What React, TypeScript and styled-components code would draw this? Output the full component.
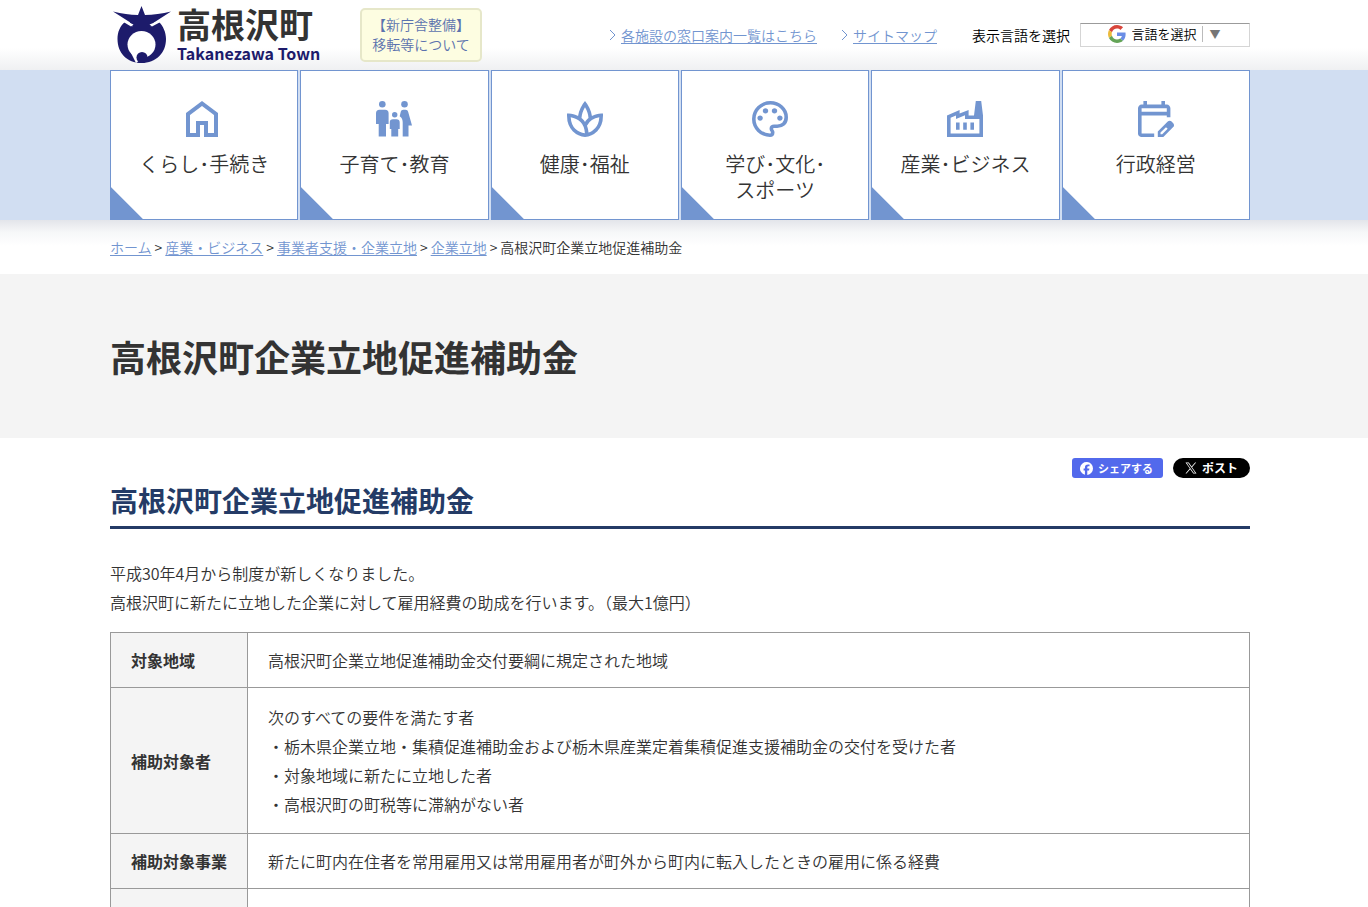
import React from "react";
import styled, { createGlobalStyle } from "styled-components";
import { MdOutlineFactory } from "react-icons/md";

const accent = "#7295d0";
const navy = "#243b66";
const rule = "#999";

const GlobalStyle = createGlobalStyle`
  *, *::before, *::after { box-sizing: border-box; }
  body {
    margin: 0;
    background: #fff;
    color: #333;
    font-family: "Noto Sans CJK JP", sans-serif;
    font-size: 16px;
    font-weight: 350;
    line-height: 29px;
  }
  a { color: ${accent}; text-underline-offset: 2px; }
  h1, h2, p, ul, ol { margin: 0; padding: 0; }
  ul, ol { list-style: none; }
`;

const Band = styled.div`
  padding-right: 8px;
`;

const Container = styled.div`
  max-width: 1140px;
  margin: 0 auto;
`;

const HeaderBand = styled(Band).attrs({ as: "header" })`
  background: linear-gradient(#fff 48px, #eff0f2 70px);
`;

const HeaderRow = styled(Container)`
  display: flex;
  align-items: center;
  height: 70px;
`;

const Logo = styled.a`
  display: flex;
  align-items: center;
  gap: 4px;
  width: 250px;
  padding-left: 3px;
  text-decoration: none;
`;

const LogoText = styled.span`
  display: flex;
  flex-direction: column;
  font-weight: 700;
`;

const TownName = styled.span`
  color: #333;
  font-size: 34px;
  line-height: 36px;
`;

const TownRoman = styled.span`
  color: #1d1b6b;
  font-size: 16px;
  line-height: 22px;
`;

const Notice = styled.a`
  padding: 4px 10px 6px;
  border: 2px solid #e6e7c9;
  border-radius: 5px;
  background: #fdfde1;
  color: #5b72ae;
  font-size: 14px;
  line-height: 20px;
  text-align: center;
  text-decoration: none;
  text-spacing-trim: space-all;
`;

const Utility = styled.div`
  display: flex;
  align-items: center;
  margin-left: auto;
  font-size: 14px;
  line-height: 20px;
`;

const UtilityLinks = styled.ul`
  display: flex;
  gap: 24px;
  margin-right: 35px;
`;

const UtilityItem = styled.li`
  display: flex;
  align-items: center;
  gap: 5px;
`;

const LanguageLabel = styled.label`
  margin-right: 10px;
  color: #000;
`;

const LanguageBox = styled.div`
  display: flex;
  align-items: center;
  justify-content: center;
  width: 170px;
  height: 24px;
  padding-bottom: 2px;
  border: 1px solid #d5d5d5;
  border-top-color: #9b9b9b;
  background: #fff;
`;

const LanguageSelect = styled.select`
  appearance: none;
  margin: 0 4px 0 6px;
  padding: 0;
  border: 0;
  background: transparent;
  color: #000;
  font: 350 13px/20px "Noto Sans CJK JP", sans-serif;
`;

const LanguageArrow = styled.span`
  padding: 0 2px 0 7px;
  border-left: 1px solid #bbb;
  color: #767676;
  font-size: 11px;
  line-height: 16px;
`;

const NavBand = styled(Band).attrs({ as: "nav" })`
  background: #d1def2;
`;

const NavGrid = styled.ul`
  display: grid;
  grid-template-columns: repeat(6, 1fr);
  gap: 2px;
  max-width: 1140px;
  margin: 0 auto;
`;

const NavCard = styled.a`
  display: flex;
  flex-direction: column;
  align-items: center;
  height: 150px;
  padding: 30px 20px 0;
  border: 1px solid ${accent};
  background: linear-gradient(45deg, ${accent} 22px, #fff 23px);
  color: ${accent};
  text-decoration: none;
`;

const NavLabel = styled.span`
  margin-top: 14px;
  color: #333;
  font-size: 20px;
  line-height: 26px;
  text-align: center;
  white-space: pre-line;
`;

const CrumbBand = styled(Band)`
  background: linear-gradient(#e3e5ea, #f6f7f8 12px, #fff 26px);
`;

const Crumbs = styled.ol`
  display: flex;
  flex-wrap: wrap;
  max-width: 1140px;
  margin: 0 auto;
  padding: 17px 0;
  font-size: 14px;
  line-height: 20px;
`;

const Crumb = styled.li`
  &:not(:last-child)::after {
    content: ">";
    margin: 0 3px;
  }
`;

const TitleBand = styled(Band)`
  padding-top: 55px;
  padding-bottom: 55px;
  background: #f4f4f4;
`;

const PageTitle = styled.h1`
  font-size: 36px;
  line-height: 54px;
`;

const Main = styled(Band).attrs({ as: "main" })`
  padding-top: 20px;
`;

const ShareRow = styled.div`
  display: flex;
  justify-content: flex-end;
  gap: 10px;
`;

const ShareButton = styled.button<{ $post?: boolean }>`
  display: flex;
  align-items: center;
  gap: 5px;
  height: 20px;
  padding: ${(p) => (p.$post ? "0 12px" : "0 10px 0 8px")};
  border: 0;
  border-radius: ${(p) => (p.$post ? 10 : 3)}px;
  background: ${(p) => (p.$post ? "#000" : "#5269ec")};
  color: #fff;
  font: 700 ${(p) => (p.$post ? 12 : 11)}px/20px "Noto Sans CJK JP", sans-serif;
`;

const SectionTitle = styled.h2`
  padding-bottom: 4px;
  border-bottom: 3px solid ${navy};
  color: ${navy};
  font-size: 28px;
  line-height: 44px;
`;

const Lead = styled.p`
  margin: 30px 0 15px;
`;

const DataTable = styled.table`
  width: 100%;
  border-collapse: collapse;
  line-height: 25px;

  th, td {
    height: 54px;
    padding: 15px 20px 14px;
    border: 1px solid ${rule};
    text-align: left;
  }
  th {
    width: 1%;
    background: #f4f4f4;
    white-space: nowrap;
  }
`;

const Requirements = styled.div`
  line-height: 29px;
`;

const TownMark = () => (
  <svg width="60" height="58" viewBox="0 0 60 58" aria-hidden="true">
    <g fill="#1d1b6b">
      <path d="M28.500 0 32 9C40 9 49 7.500 58 5.500L41 16.500 37.500 20.500C41 18.500 43.500 17.500 46 16C50 20 53 26 53 33C53 47 43 57 28.500 57C14 57 4.500 47 4.500 33C4.500 26 7 20 12 16C14 17.500 17 18.500 20 20.500L16.500 16 0 5.500C9 7.500 17 9 25 9Z" />
    </g>
    <ellipse cx="28.500" cy="38.500" rx="14" ry="13.500" fill="#fff" />
    <path d="M18 20.500 20.500 18.500 11.500 14.500 10.500 16ZM39 20.500 36.500 18.500 46.500 14.500 47.500 16Z" fill="#fff" />
    <path d="M18 47 23 57 27 54 33 48Z" fill="#fff" />
    <circle cx="29" cy="51.500" r="5.500" fill="#1d1b6b" />
  </svg>
);

const Chevron = () => (
  <svg width="7" height="12" viewBox="0 0 7 12" fill="none" stroke={accent} aria-hidden="true">
    <path d="M1 1l5 5-5 5" />
  </svg>
);

const GoogleMark = () => (
  <svg width="18" height="18" viewBox="0 0 48 48" aria-hidden="true">
    <path fill="#d8453b" d="M24 9.500c3.540 0 6.710 1.220 9.210 3.600l6.850-6.850C35.900 2.380 30.470 0 24 0 14.620 0 6.510 5.380 2.560 13.220l7.980 6.190C12.430 13.720 17.740 9.500 24 9.500z" />
    <path fill="#6a8ee6" d="M46.980 24.550c0-1.570-.15-3.090-.38-4.550H24v9.020h12.940c-.58 2.960-2.260 5.480-4.780 7.180l7.730 6c4.510-4.180 7.090-10.360 7.090-17.650z" />
    <path fill="#ecbb3a" d="M10.530 28.590c-.48-1.450-.76-2.990-.76-4.590s.27-3.140.76-4.590l-7.980-6.190C.92 16.460 0 20.120 0 24s.92 7.540 2.560 10.780l7.970-6.190z" />
    <path fill="#64a457" d="M24 48c6.480 0 11.930-2.130 15.890-5.810l-7.730-6c-2.150 1.450-4.920 2.300-8.160 2.300-6.260 0-11.570-4.220-13.470-9.910l-7.980 6.190C6.510 42.620 14.620 48 24 48z" />
  </svg>
);

type SymbolProps = { d: string; viewBox: string; width?: number };

const SymbolIcon = ({ d, viewBox, width = 36 }: SymbolProps) => (
  <svg
    width={width}
    height="36"
    viewBox={viewBox}
    preserveAspectRatio="xMinYMid meet"
    fill="currentColor"
    aria-hidden="true"
  >
    <path d={d} />
  </svg>
);

const homePath =
  "M240-200h120v-240h240v240h120v-360L480-740 240-560v360Zm-80 80v-480l320-240 320 240v480H520v-240h-80v240H160Z";

const spaPath =
  "M480-80q-73-9-145-39.500T206.500-207Q150-264 115-351T80-560v-40h40q51 0 105 13t101 39q12-86 54.500-176.500T480-880q57 65 99.500 155.500T634-548q47-26 101-39t105-13h40v40q0 122-35 209t-91.500 144q-56.500 57-128 87.500T480-80Zm-2-82q-11-166-98.500-251T162-518q11 171 101.500 255T478-162Zm2-254q15-22 36.500-45.500T558-502q-2-57-22.500-119T480-742q-35 59-55.500 121T402-502q20 17 42 40.500t36 45.500Zm78 236q37-12 77-35t74.500-62.500q34.500-39.500 59-98.500T798-518q-94 14-165 62.500T524-332q12 32 20.500 70t13.500 82Z";

const palettePath =
  "M480-80q-82 0-155-31.500t-127.500-86Q143-252 111.500-325T80-480q0-83 32.500-156t88-127Q256-817 330-848.500T488-880q80 0 151 27.500t124.500 76q53.500 48.500 85 115T880-518q0 115-70 176.500T640-280h-74q-9 0-12.500 5t-3.500 11q0 12 15 34.500t15 51.500q0 50-27.500 74T480-80ZM260-440q26 0 43-17t17-43q0-26-17-43t-43-17q-26 0-43 17t-17 43q0 26 17 43t43 17Zm120-160q26 0 43-17t17-43q0-26-17-43t-43-17q-26 0-43 17t-17 43q0 26 17 43t43 17Zm200 0q26 0 43-17t17-43q0-26-17-43t-43-17q-26 0-43 17t-17 43q0 26 17 43t43 17Zm120 160q26 0 43-17t17-43q0-26-17-43t-43-17q-26 0-43 17t-17 43q0 26 17 43t43 17ZM480-160q9 0 14.500-5t5.500-13q0-14-15-33t-15-57q0-42 29-67t71-25h70q66 0 113-38.500T800-518q0-121-92.500-201.500T488-800q-136 0-232 93t-96 227q0 133 93.500 226.500T480-160Z";

const calendarPath =
  "M200-80q-33 0-56.500-23.500T120-160v-560q0-33 23.500-56.500T200-800h40v-80h80v80h320v-80h80v80h40q33 0 56.500 23.500T840-720v200h-80v-40H200v400h280v80H200Zm0-560h560v-80H200v80ZM560-80v-123l221-220q9-9 20-13t22-4q12 0 23 4.500t20 13.500l37 37q8 9 12.500 20t4.500 22q0 11-4 22.500T903-300L683-80H560Zm60-60h38l121-122-18-19-19-18-122 121v38Z";

const FamilyIcon = () => (
  <svg width="36" height="36" viewBox="0 0 36 36" fill="currentColor" aria-hidden="true">
    <circle cx="6.300" cy="3.300" r="3.300" />
    <circle cx="28.500" cy="3.300" r="3.300" />
    <circle cx="18.700" cy="13.800" r="2.700" />
    <path d="M3.500 8.800h5.600a3.500 3.500 0 0 1 3.500 3.500V23H10v12.500H2.700V23H0V12.300a3.500 3.500 0 0 1 3.500-3.500Z" />
    <path d="M17 18.300h3.400a3.300 3.300 0 0 1 3.300 3.300V28h-1.500v7.500h-6.900V28h-1.500v-6.400a3.200 3.200 0 0 1 3.200-3.300Z" />
    <path d="M27.300 8.800h2.200c1.400 0 2.300.8 2.700 2.100L36 24.500h-3.500v11h-5.800v-14c0-2.500-.7-4.600-3-6.200l1-4.400c.4-1.300 1.300-2.100 2.600-2.100Z" />
  </svg>
);

const FacebookMark = () => (
  <svg width="13" height="13" viewBox="0 0 24 24" fill="#fff" aria-hidden="true">
    <path d="M24 12a12 12 0 1 0-14.900 11.650v-7.980H6.630V12H9.100v-1.580c0-4.090 1.850-5.980 5.860-5.980.76 0 2.070.15 2.610.3v3.320c-.28-.03-.78-.04-1.390-.04-1.970 0-2.730.75-2.730 2.680V12h3.920l-.67 3.670h-3.250v8.240A12 12 0 0 0 24 12z" />
  </svg>
);

const XMark = () => (
  <svg width="12" height="12" viewBox="0 0 24 24" fill="#fff" aria-hidden="true">
    <path d="M14.100 10.300 22.300 1h-2l-7.100 8.100L7.600 1H1l8.600 12.200L1 23h2l7.500-8.600 6 8.600H23zM3.700 2.500h3l13.600 19.100h-3z" />
  </svg>
);

const navItems = [
  { label: "くらし･手続き", icon: <SymbolIcon d={homePath} viewBox="160 -840 720 720" /> },
  { label: "子育て･教育", icon: <FamilyIcon /> },
  { label: "健康･福祉", icon: <SymbolIcon d={spaPath} viewBox="80 -880 800 800" /> },
  {
    label: "学び･文化･\nスポーツ",
    icon: <SymbolIcon d={palettePath} viewBox="80 -880 1022 800" width={46} />,
  },
  { label: "産業･ビジネス", icon: <MdOutlineFactory size={36} viewBox="2 2 20 20" /> },
  { label: "行政経営", icon: <SymbolIcon d={calendarPath} viewBox="120 -880 800 800" /> },
];

const crumbLinks = ["ホーム", "産業・ビジネス", "事業者支援・企業立地", "企業立地"];

export default function App() {
  return (
    <>
      <GlobalStyle />
      <HeaderBand>
        <HeaderRow>
          <Logo href="#">
            <TownMark />
            <LogoText>
              <TownName>高根沢町</TownName>
              <TownRoman>Takanezawa Town</TownRoman>
            </LogoText>
          </Logo>
          <Notice href="#">
            【新庁舎整備】
            <br />
            移転等について
          </Notice>
          <Utility>
            <UtilityLinks>
              <UtilityItem>
                <Chevron />
                <a href="#">各施設の窓口案内一覧はこちら</a>
              </UtilityItem>
              <UtilityItem>
                <Chevron />
                <a href="#">サイトマップ</a>
              </UtilityItem>
            </UtilityLinks>
            <LanguageLabel htmlFor="language">表示言語を選択</LanguageLabel>
            <LanguageBox>
              <GoogleMark />
              <LanguageSelect id="language">
                <option>言語を選択</option>
              </LanguageSelect>
              <LanguageArrow aria-hidden="true">▼</LanguageArrow>
            </LanguageBox>
          </Utility>
        </HeaderRow>
      </HeaderBand>

      <NavBand>
        <NavGrid>
          {navItems.map((item) => (
            <li key={item.label}>
              <NavCard href="#">
                {item.icon}
                <NavLabel>{item.label}</NavLabel>
              </NavCard>
            </li>
          ))}
        </NavGrid>
      </NavBand>

      <CrumbBand>
        <Crumbs>
          {crumbLinks.map((text) => (
            <Crumb key={text}>
              <a href="#">{text}</a>
            </Crumb>
          ))}
          <Crumb>高根沢町企業立地促進補助金</Crumb>
        </Crumbs>
      </CrumbBand>

      <TitleBand>
        <Container>
          <PageTitle>高根沢町企業立地促進補助金</PageTitle>
        </Container>
      </TitleBand>

      <Main>
        <Container>
          <ShareRow>
            <ShareButton type="button">
              <FacebookMark />
              シェアする
            </ShareButton>
            <ShareButton type="button" $post>
              <XMark />
              ポスト
            </ShareButton>
          </ShareRow>
          <SectionTitle>高根沢町企業立地促進補助金</SectionTitle>
          <Lead>
            平成30年4月から制度が新しくなりました。
            <br />
            高根沢町に新たに立地した企業に対して雇用経費の助成を行います。（最大1億円）
          </Lead>
          <DataTable>
            <tbody>
              <tr>
                <th scope="row">対象地域</th>
                <td>高根沢町企業立地促進補助金交付要綱に規定された地域</td>
              </tr>
              <tr>
                <th scope="row">補助対象者</th>
                <td>
                  <Requirements>
                    次のすべての要件を満たす者
                    <br />
                    ・栃木県企業立地・集積促進補助金および栃木県産業定着集積促進支援補助金の交付を受けた者
                    <br />
                    ・対象地域に新たに立地した者
                    <br />
                    ・高根沢町の町税等に滞納がない者
                  </Requirements>
                </td>
              </tr>
              <tr>
                <th scope="row">補助対象事業</th>
                <td>新たに町内在住者を常用雇用又は常用雇用者が町外から町内に転入したときの雇用に係る経費</td>
              </tr>
              <tr>
                <th scope="row" />
                <td />
              </tr>
            </tbody>
          </DataTable>
        </Container>
      </Main>
    </>
  );
}
